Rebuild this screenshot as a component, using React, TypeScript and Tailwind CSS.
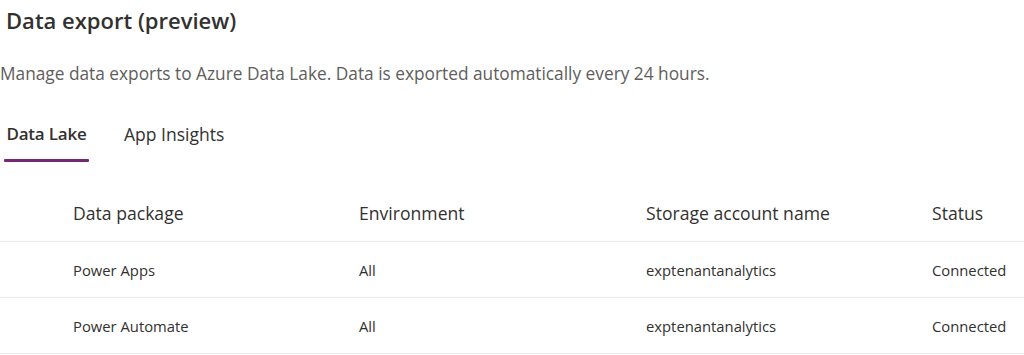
import React from "react";

const rows = [
  { pkg: "Power Apps", env: "All", storage: "exptenantanalytics", status: "Connected" },
  { pkg: "Power Automate", env: "All", storage: "exptenantanalytics", status: "Connected" },
];

export default function App() {
  return (
    <div
      className="w-[1024px] h-[355px] bg-white overflow-hidden text-[#323130]"
      style={{ fontFamily: '"Open Sans", "Noto Sans", Arial, sans-serif' }}
    >
      <div className="h-[40px] pl-[6px] flex items-center">
        <h1 className="text-[22px] font-semibold leading-none">Data export (preview)</h1>
      </div>
      <div className="h-[68px] flex items-center">
        <p className="text-[17.3px] text-[#605e5c] leading-none">
          Manage data exports to Azure Data Lake. Data is exported automatically every 24 hours.
        </p>
      </div>
      <div className="flex pl-[4px] gap-[35px] h-[54px]">
        <div className="flex flex-col w-[85px]">
          <div className="h-[53px] flex items-center justify-center text-[17px] font-semibold tracking-[-0.2px]">Data Lake</div>
          <div className="h-[3px] bg-[#742774] rounded-[1px]" />
        </div>
        <div className="h-[53px] flex items-center text-[17.5px]">App Insights</div>
      </div>
      <div className="h-[24px]" />
      <div className="grid grid-cols-[73px_286px_287px_286px_1fr] h-[56px] items-center border-b border-[#edebe9] text-[17.6px]">
        <div />
        <div>Data package</div>
        <div>Environment</div>
        <div>Storage account name</div>
        <div>Status</div>
      </div>
      {rows.map((r) => (
        <div
          key={r.pkg}
          className="grid grid-cols-[73px_286px_287px_286px_1fr] h-[56px] items-center pt-[2px] border-b border-[#edebe9] text-[14.8px]"
        >
          <div />
          <div>{r.pkg}</div>
          <div>{r.env}</div>
          <div>{r.storage}</div>
          <div>{r.status}</div>
        </div>
      ))}
    </div>
  );
}
